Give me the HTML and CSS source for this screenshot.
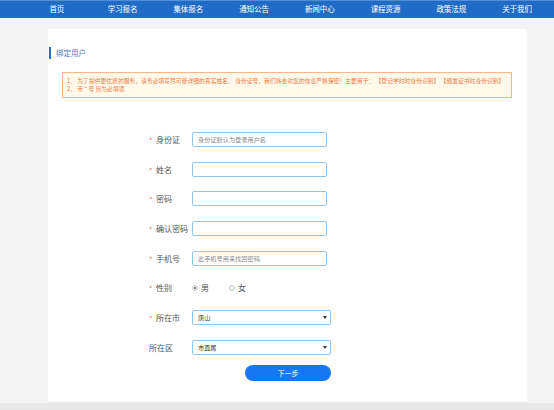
FILE: index.html
```html
<!DOCTYPE html>
<html lang="zh-CN">
<head>
<meta charset="utf-8">
<title>绑定用户</title>
<link rel="stylesheet" href="styles.css">
</head>
<body>
<nav class="topnav">
  <ul class="nav-list">
    <li>首页</li>
    <li>学习报名</li>
    <li>集体报名</li>
    <li>通知公告</li>
    <li>新闻中心</li>
    <li>课程资源</li>
    <li>政策法规</li>
    <li>关于我们</li>
  </ul>
</nav>
<main class="card">
  <h2 class="card-title">绑定用户</h2>
  <div class="notice">
    <p>1、 为了提供更优质的服务，请务必填写尽可能详细的真实姓名、 身份证号，我们将会对您的信息严格保密！主要用于： 【登记学时时身份识别】 【颁发证书时身份识别】</p>
    <p>2、 带 * 号 皆为必填项</p>
  </div>
  <form class="form">
    <div class="row">
      <label class="label"><span class="req">*</span>身份证</label>
      <input class="input" type="text" placeholder="身份证默认为登录用户名">
    </div>
    <div class="row">
      <label class="label"><span class="req">*</span>姓名</label>
      <input class="input" type="text">
    </div>
    <div class="row">
      <label class="label"><span class="req">*</span>密码</label>
      <input class="input" type="password">
    </div>
    <div class="row">
      <label class="label"><span class="req">*</span>确认密码</label>
      <input class="input" type="password">
    </div>
    <div class="row">
      <label class="label"><span class="req">*</span>手机号</label>
      <input class="input" type="text" placeholder="此手机号用来找回密码">
    </div>
    <div class="row">
      <label class="label"><span class="req">*</span>性别</label>
      <div class="radios">
        <span class="radio"><span class="dot checked"></span>男</span>
        <span class="radio"><span class="dot"></span>女</span>
      </div>
    </div>
    <div class="row">
      <label class="label"><span class="req">*</span>所在市</label>
      <div class="select"><span>唐山</span><span class="arrow"></span></div>
    </div>
    <div class="row">
      <label class="label">所在区</label>
      <div class="select"><span>市直属</span><span class="arrow"></span></div>
    </div>
    <div class="actions">
      <button class="btn" type="button">下一步</button>
    </div>
  </form>
</main>
<footer class="footer"></footer>
</body>
</html>
```

FILE: styles.css
```css
* { box-sizing: border-box; }
html, body { margin: 0; padding: 0; }
body {
  background: #f3f3f3;
  font-family: "Noto Sans CJK SC", "Noto Sans", sans-serif;
  height: 410px;
  overflow: hidden;
}
.topnav {
  height: 18px;
  background: #1f6bc6;
  border-top: 1px solid #4f8fdc;
}
.nav-list {
  list-style: none;
  margin: 0 0 0 24px;
  padding: 0;
  display: flex;
  width: 526px;
}
.nav-list li {
  flex: 1;
  text-align: center;
  color: #fff;
  font-size: 7.5px;
  line-height: 15px;
}
.card {
  margin: 11px 0 0 48px;
  width: 479px;
  height: 372px;
  background: #fff;
  padding-top: 18px;
}
.card-title {
  margin: 0 0 0 1px;
  border-left: 2px solid #2a6cc4;
  padding-left: 5px;
  height: 12px;
  line-height: 12px;
  font-size: 7.5px;
  font-weight: normal;
  color: #4f7bb5;
}
.notice {
  margin: 13px 0 0 14px;
  width: 450px;
  height: 26px;
  border: 1px solid #f6b88a;
  background: #fff9ea;
  padding: 4px 0 0 4px;
  color: #ee7a3e;
  font-size: 5.8px;
  line-height: 8px;
}
.notice p { margin: 0; white-space: pre; }
.form {
  margin: 26.6px 0 0 101px;
}
.row {
  display: flex;
  align-items: center;
  height: 29.7px;
}
.label {
  width: 43px;
  font-size: 8px;
  color: #555;
  white-space: nowrap;
}
.req {
  color: #f2574a;
  display: inline-block;
  width: 7px;
  font-size: 7px;
}
.input {
  width: 135px;
  height: 15px;
  border: 1px solid #8fc6f0;
  border-radius: 2px;
  padding: 0 0 0 5px;
  font-family: inherit;
  font-size: 6.2px;
  color: #333;
  outline: none;
}
.input::placeholder { color: #8a8a8a; }
.radios {
  display: flex;
  font-size: 8px;
  color: #555;
}
.radio {
  display: flex;
  align-items: center;
  width: 37px;
}
.dot {
  width: 6px;
  height: 6px;
  border: 1px solid #c4c4c4;
  border-radius: 50%;
  margin: 0 3px 0 0;
  background: #f4f4f4;
  position: relative;
}
.dot.checked::after {
  content: "";
  position: absolute;
  left: 1px;
  top: 1px;
  width: 2px;
  height: 2px;
  border-radius: 50%;
  background: #555;
}
.select {
  width: 139px;
  height: 15px;
  border: 1px solid #8fc6f0;
  border-radius: 2px;
  display: flex;
  align-items: center;
  justify-content: space-between;
  padding: 0 3px 0 5px;
  font-size: 6.2px;
  color: #333;
}
.arrow {
  width: 0;
  height: 0;
  border-left: 2px solid transparent;
  border-right: 2px solid transparent;
  border-top: 3px solid #333;
}
.actions {
  margin: 2.8px 0 0 96px;
}
.btn {
  width: 86px;
  height: 16px;
  border: none;
  border-radius: 8px;
  background: #1677f2;
  color: #fff;
  font-family: inherit;
  font-size: 7px;
  padding: 0;
  display: block;
}
.footer {
  margin-top: 2px;
  height: 10px;
  background: #e7e7e7;
}
```
